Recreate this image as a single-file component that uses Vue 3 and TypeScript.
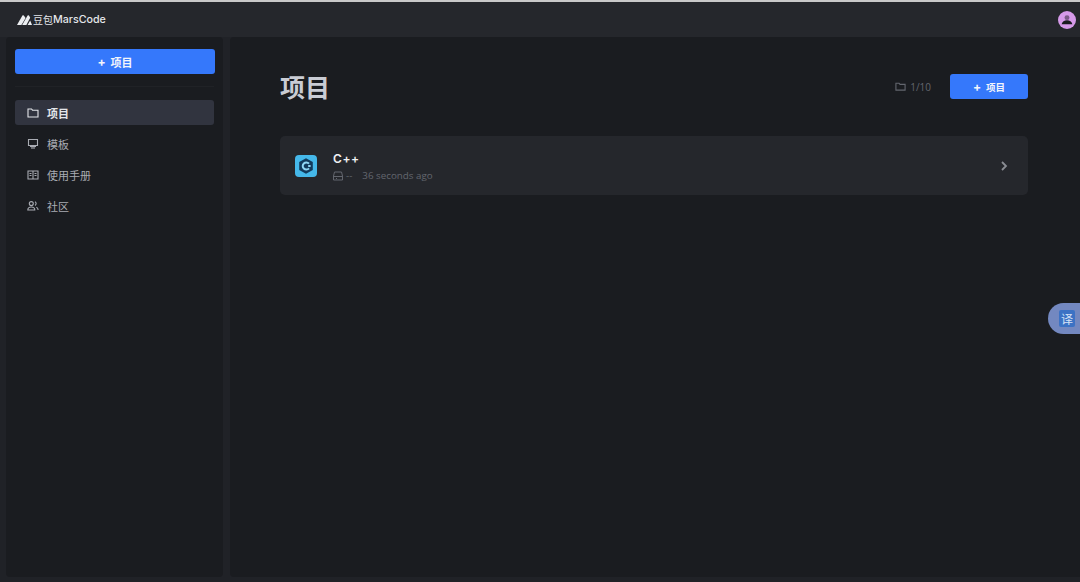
<template>
  <div class="page">
    <header class="topbar">
      <div class="brand">
        <svg class="brand-mark" width="15" height="10" viewBox="0 0 15 10">
          <path d="M0 10 L5.4 .6 Q6 0 6.8 .6 L8.6 3 L4.4 10 Z" fill="#eceef1" />
          <path d="M5.2 10 L10.6 .6 Q11.4 0 12 .6 L13.2 2.8 L9.4 10 Z" fill="#eceef1" />
          <path d="M10.6 10 L13.2 5.6 L15 10 Z" fill="#eceef1" />
        </svg>
        <span class="brand-cn">豆包</span><span class="brand-en">MarsCode</span>
      </div>
      <div class="avatar">
        <svg width="18" height="18" viewBox="0 0 19 19">
          <circle cx="9.5" cy="9.5" r="9.5" fill="#d69ae9" />
          <circle cx="9.5" cy="7" r="2.6" fill="#7b5a88" />
          <path d="M3.8 14 Q5 9.8 9.5 9.8 Q14 9.8 15.2 14 Z" fill="#191a1e" />
        </svg>
      </div>
    </header>

    <div class="body">
      <aside class="sidebar">
        <button class="btn btn-wide"><span class="plus">+</span>项目</button>
        <div class="divider"></div>
        <nav class="nav">
          <a v-for="item in navItems" :key="item.label" class="nav-item" :class="{ active: item.active }">
            <svg class="nav-icon" width="12" height="12" viewBox="0 0 12 12" fill="none" stroke="currentColor" stroke-width="1.1">
              <path v-for="d in item.paths" :key="d" :d="d" />
            </svg>
            <span>{{ item.label }}</span>
          </a>
        </nav>
      </aside>

      <main class="main">
        <div class="title-row">
          <h1>项目</h1>
          <div class="title-actions">
            <span class="quota">
              <svg width="11" height="11" viewBox="0 0 12 12" fill="none" stroke="currentColor" stroke-width="1.2">
                <path d="M1 2.5h3.5l1 1.2H11v6.3H1z" />
              </svg>
              1/10
            </span>
            <button class="btn btn-small"><span class="plus">+</span>项目</button>
          </div>
        </div>

        <div class="project-card">
          <svg class="cpp-icon" width="22" height="22" viewBox="0 0 22 22">
            <rect width="22" height="22" rx="4" fill="#45b8ea" />
            <path d="M11 3.2 L17.8 7.1 V14.9 L11 18.8 L4.2 14.9 V7.1 Z" fill="#123a5c" />
            <path d="M14 8.6 A3.6 3.6 0 1 0 14 13.4" fill="none" stroke="#8fd6f5" stroke-width="2" />
            <rect x="13.2" y="10" width="2.4" height="2" fill="#8fd6f5" />
          </svg>
          <div class="project-info">
            <div class="project-name">C++</div>
            <div class="project-meta">
              <svg width="10" height="10" viewBox="0 0 10 10" fill="none" stroke="currentColor" stroke-width="1">
                <path d="M1.5 1h7l1 4v4H.5V5zM.5 5.5h9M3 7.5h1" />
              </svg>
              <span class="meta-dash">--</span>
              <span class="meta-time">36 seconds ago</span>
            </div>
          </div>
          <svg class="chevron" width="8" height="10" viewBox="0 0 8 10" fill="none" stroke="currentColor" stroke-width="1.8">
            <path d="M2 1l4 4-4 4" />
          </svg>
        </div>
      </main>
    </div>

    <div class="bottom-strip"></div>

    <div class="translate-tab"><span class="translate-box">译</span></div>
  </div>
</template>

<script setup lang="ts">
interface NavItem {
  label: string
  active?: boolean
  paths: string[]
}

const navItems: NavItem[] = [
  { label: '项目', active: true, paths: ['M1 2h3.5l1 1.2H11V10H1z'] },
  { label: '模板', paths: ['M1.5 1.5h9v6h-9z', 'M4 10h4', 'M3 8.5h6'] },
  { label: '使用手册', paths: ['M1 2h10v8H1z', 'M6 2v8', 'M2.5 4.5h2M2.5 6.5h2M7.5 4.5h2M7.5 6.5h2'] },
  { label: '社区', paths: ['M6.3 3.6a2 2 0 1 1-4 0a2 2 0 1 1 4 0z', 'M.8 10c0-2 1.4-3 3.5-3s3.5 1 3.5 3z', 'M8 1.8a2 2 0 0 1 0 3.6', 'M9.3 7.2c1.1.4 1.8 1.3 1.8 2.8'] }
]
</script>

<style>
html,
body {
  margin: 0;
  background: #1a1c20;
}
</style>

<style scoped>
.page {
  position: relative;
  width: 1080px;
  height: 582px;
  overflow: hidden;
  display: flex;
  flex-direction: column;
  box-sizing: border-box;
  border-top: 2px solid #c9c9c9;
  background: #202227;
  font-family: "Inter", "Noto Sans CJK SC", sans-serif;
}

.topbar {
  height: 35px;
  flex: none;
  display: flex;
  align-items: center;
  justify-content: space-between;
  padding: 0 4px 0 17px;
  background: #25272c;
}

.brand {
  display: flex;
  align-items: center;
  color: #e4e6ea;
}

.brand-mark {
  margin-right: 1px;
}

.brand-cn {
  font-size: 10px;
  width: 20px;
}

.brand-en {
  font-size: 10.7px;
  font-weight: 500;
}

.avatar {
  display: flex;
}

.body {
  flex: 1;
  min-height: 0;
  display: flex;
  padding-left: 6px;
  gap: 7px;
}

.sidebar {
  width: 217px;
  flex: none;
  box-sizing: border-box;
  padding: 12px 9px;
  background: #1a1c20;
  border-radius: 4px;
}

.btn {
  display: flex;
  align-items: center;
  justify-content: center;
  border: none;
  border-radius: 3px;
  background: #3578fb;
  color: #f2f5fb;
  font-family: inherit;
  font-weight: 700;
}

.btn-wide {
  width: 200px;
  height: 25px;
  font-size: 11px;
}

.btn-small {
  width: 78px;
  height: 25px;
  font-size: 9.5px;
}

.plus {
  margin-right: 5px;
  font-size: 12px;
}

.divider {
  height: 1px;
  margin: 12px 0 13px;
  background: #202226;
}

.nav {
  display: flex;
  flex-direction: column;
  gap: 6px;
}

.nav-item {
  display: flex;
  align-items: center;
  gap: 8px;
  height: 25px;
  padding-left: 12px;
  border-radius: 3px;
  font-size: 11px;
  color: #a9acb3;
}

.nav-item.active {
  background: #31343f;
  color: #e4e6ea;
  font-weight: 700;
}

.main {
  flex: 1;
  min-width: 0;
  padding: 0 52px 0 50px;
  background: #1a1c20;
  border-radius: 4px 0 0 4px;
}

.title-row {
  height: 99px;
  display: flex;
  align-items: center;
  justify-content: space-between;
}

h1 {
  margin: 0 0 2px;
  font-size: 25px;
  font-weight: 700;
  color: #c9ccd4;
}

.title-actions {
  display: flex;
  align-items: center;
  gap: 19px;
}

.quota {
  display: flex;
  align-items: center;
  gap: 4px;
  font-family: "Open Sans", sans-serif;
  font-size: 10px;
  color: #63666e;
}

.project-card {
  height: 59px;
  display: flex;
  align-items: center;
  padding: 0 20px 0 15px;
  background: #25272c;
  border-radius: 5px;
}

.cpp-icon {
  flex: none;
}

.project-info {
  flex: 1;
  margin-left: 16px;
  padding-top: 2px;
}

.project-name {
  font-size: 12px;
  font-weight: 600;
  line-height: 16px;
  letter-spacing: 0.6px;
  color: #f0f1f3;
}

.project-meta {
  display: flex;
  align-items: center;
  margin-top: 2px;
  font-family: "Open Sans", sans-serif;
  font-size: 9.8px;
  line-height: 14px;
  color: #63666e;
}

.meta-dash {
  margin-left: 3px;
}

.meta-time {
  margin-left: 10px;
}

.chevron {
  color: #8a8d94;
}

.bottom-strip {
  height: 5px;
  flex: none;
  background: #202227;
}

.translate-tab {
  position: absolute;
  top: 301px;
  right: 0;
  width: 32px;
  height: 31px;
  display: flex;
  align-items: center;
  padding-left: 11px;
  box-sizing: border-box;
  border-radius: 16px 0 0 16px;
  background: #7388c0;
}

.translate-box {
  width: 16px;
  height: 17px;
  display: flex;
  align-items: center;
  justify-content: center;
  border-radius: 2px;
  background: #3c72c4;
  color: #d6e2f6;
  font-size: 12px;
}
</style>
